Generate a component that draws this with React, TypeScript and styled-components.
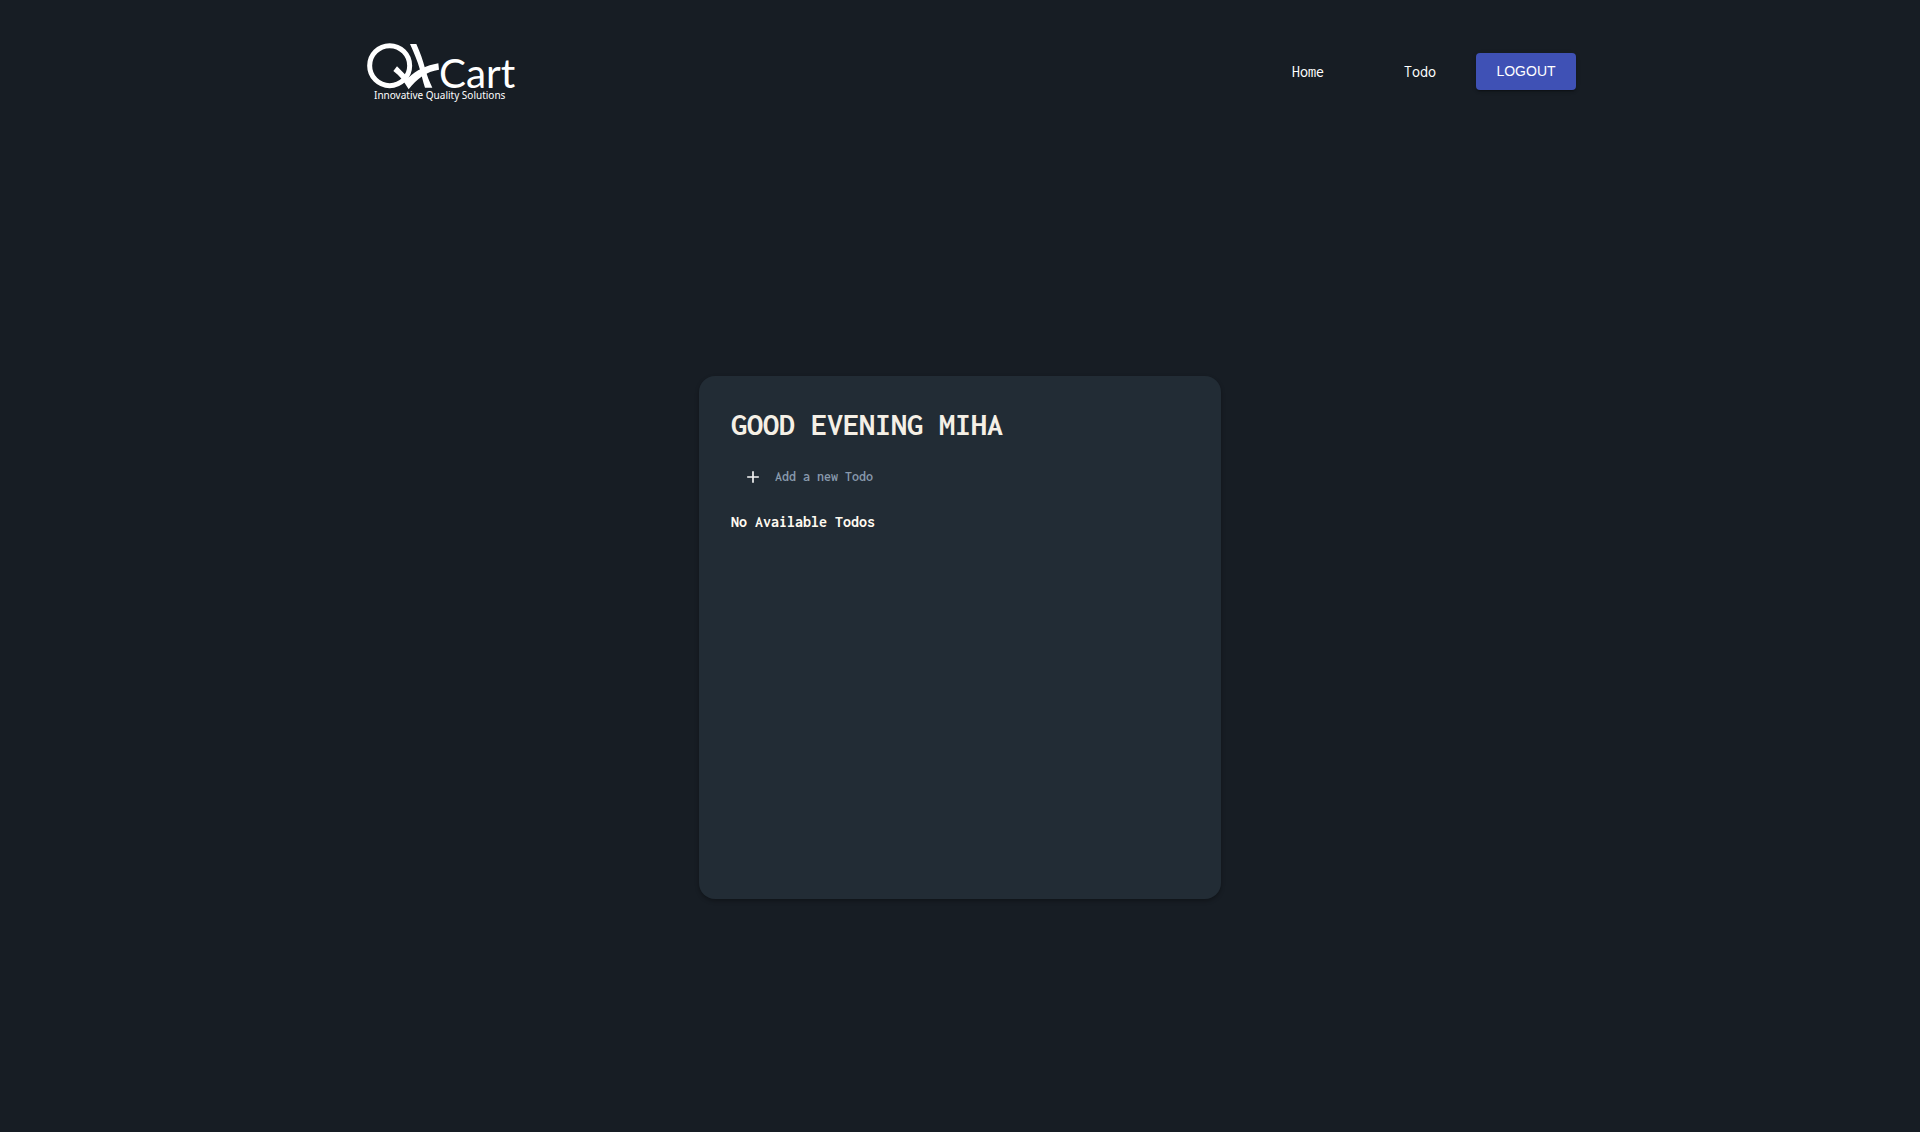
import React, { useState } from "react";
import styled, { createGlobalStyle } from "styled-components";

const mono = `Inconsolata, "Noto Sans Mono CJK JP", "DejaVu Sans Mono", monospace`;

const GlobalStyle = createGlobalStyle`
  *, *::before, *::after { box-sizing: border-box; }
  body {
    margin: 0;
    background: #171d24;
    color: #ffffff;
    font-family: ${mono};
    font-size: 16px;
    line-height: 24px;
  }
`;

const Page = styled.div`
  min-height: 100vh;
  display: flex;
  flex-direction: column;
`;

const Header = styled.header`
  min-height: 143px;
  display: flex;
  align-items: center;
  justify-content: space-around;
`;

const LogoLink = styled.a`
  display: block;
  width: 220px;
  svg { display: block; width: 100%; }
`;

const Nav = styled.nav`
  display: flex;
  align-items: center;
`;

const NavLink = styled.a`
  padding: 0 40px;
  color: #ffffff;
  text-decoration: none;
`;

const LogoutButton = styled.button`
  min-width: 100px;
  padding: 6px 16px;
  border: 0;
  border-radius: 4px;
  background: #3f51b5;
  color: #ffffff;
  font: 500 14px/25px "Liberation Sans", Arial, sans-serif;
  text-transform: uppercase;
  cursor: pointer;
  box-shadow: 0 3px 1px -2px rgba(0, 0, 0, 0.2), 0 2px 2px rgba(0, 0, 0, 0.14),
    0 1px 5px rgba(0, 0, 0, 0.12);
`;

const Main = styled.main`
  flex: 1;
  display: flex;
  align-items: center;
  justify-content: center;
`;

const Card = styled.section`
  width: 100%;
  max-width: 522px;
  min-height: 523px;
  padding: 32px;
  border-radius: 16px;
  background: #222c35;
  box-shadow: 0 2px 4px rgba(0, 0, 0, 0.3);
`;

const Greeting = styled.h1`
  margin: 0 0 17px;
  color: #f5f0e6;
  font-size: 32px;
  line-height: 34px;
  font-weight: 700;
  text-transform: uppercase;
`;

const AddForm = styled.form`
  display: flex;
  align-items: center;
  gap: 12px;
  padding: 6px 12px;
  margin-bottom: 15px;
`;

const AddButton = styled.button`
  display: flex;
  padding: 0;
  border: 0;
  background: none;
  color: #f5f5f5;
  cursor: pointer;
`;

const AddInput = styled.input`
  flex: 1;
  min-width: 0;
  height: 24px;
  padding: 0;
  border: 0;
  outline: 0;
  background: none;
  color: #f5f0e6;
  font: 600 14px/24px ${mono};
  &::placeholder { color: #8899ac; opacity: 1; }
`;

const EmptyText = styled.p`
  margin: 0;
  color: #fffaf0;
  font-weight: 700;
`;

function Logo() {
  return (
    <svg viewBox="-33 30 660 192" fill="#fff" role="img" aria-label="QxCart">
      <circle cx="104" cy="107" r="60" fill="none" stroke="#fff" strokeWidth="15" />
      <path d="M165 42h19c12 26 20 50 26 73 6 22 13 40 22 58h-22c-6-17-10-38-16-57-6-22-17-47-29-74Z" />
      <path d="M126 109l34 34c24-22 54-37 90-43l2 19c-38 6-66 26-91 59-13-23-27-41-46-55Z" />
      <text x="252" y="174" fontFamily="Lato, sans-serif" fontSize="121">Cart</text>
      <text x="57" y="206" fontFamily="'Noto Sans', sans-serif" fontSize="30">
        Innovative Quality Solutions
      </text>
    </svg>
  );
}

export default function App() {
  const [text, setText] = useState("");
  return (
    <Page>
      <GlobalStyle />
      <Header>
        <LogoLink href="#home">
          <Logo />
        </LogoLink>
        <Nav>
          <NavLink href="#home">Home</NavLink>
          <NavLink href="#todo">Todo</NavLink>
          <LogoutButton type="button">Logout</LogoutButton>
        </Nav>
      </Header>
      <Main>
        <Card>
          <Greeting>Good evening Miha</Greeting>
          <AddForm onSubmit={(e) => e.preventDefault()}>
            <AddButton type="submit" aria-label="Add todo">
              <svg width="20" height="20" viewBox="0 0 24 24" fill="currentColor">
                <path d="M19 13h-6v6h-2v-6H5v-2h6V5h2v6h6v2z" />
              </svg>
            </AddButton>
            <AddInput
              aria-label="New todo"
              placeholder="Add a new Todo"
              value={text}
              onChange={(e) => setText(e.target.value)}
            />
          </AddForm>
          <EmptyText>No Available Todos</EmptyText>
        </Card>
      </Main>
    </Page>
  );
}
